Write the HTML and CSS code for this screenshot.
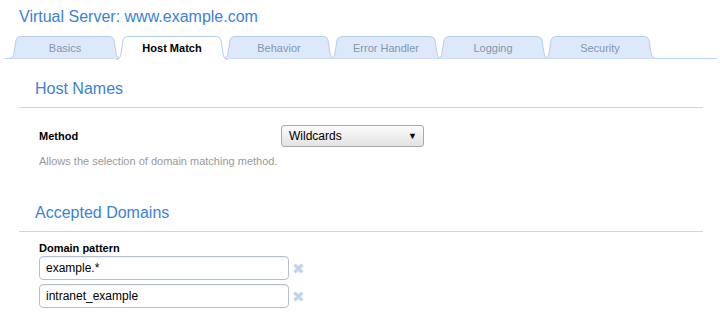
FILE: index.html
```html
<!DOCTYPE html>
<html lang="en">
<head>
  <meta charset="UTF-8" />
  <title>Virtual Server</title>
  <link rel="stylesheet" href="styles.css">
</head>
<body>
  <div class="page-title">Virtual Server: www.example.com</div>

  <div class="tabs">
    <div class="tab"><svg class="tab-bg" viewBox="0 0 112 23"><path d="M0.5,22.5 Q4,22 5,17 L7,4 Q8,0.5 12,0.5 L100,0.5 Q104,0.5 105,4 L107,17 Q108,22 111.5,22.5"/></svg><span>Basics</span></div>
    <div class="tab active"><svg class="tab-bg" viewBox="0 0 112 24"><path d="M0.5,23.5 Q4,23 5,18 L7,4 Q8,0.5 12,0.5 L100,0.5 Q104,0.5 105,4 L107,18 Q108,23 111.5,23.5"/></svg><span>Host Match</span></div>
    <div class="tab"><svg class="tab-bg" viewBox="0 0 112 23"><path d="M0.5,22.5 Q4,22 5,17 L7,4 Q8,0.5 12,0.5 L100,0.5 Q104,0.5 105,4 L107,17 Q108,22 111.5,22.5"/></svg><span>Behavior</span></div>
    <div class="tab"><svg class="tab-bg" viewBox="0 0 112 23"><path d="M0.5,22.5 Q4,22 5,17 L7,4 Q8,0.5 12,0.5 L100,0.5 Q104,0.5 105,4 L107,17 Q108,22 111.5,22.5"/></svg><span>Error Handler</span></div>
    <div class="tab"><svg class="tab-bg" viewBox="0 0 112 23"><path d="M0.5,22.5 Q4,22 5,17 L7,4 Q8,0.5 12,0.5 L100,0.5 Q104,0.5 105,4 L107,17 Q108,22 111.5,22.5"/></svg><span>Logging</span></div>
    <div class="tab"><svg class="tab-bg" viewBox="0 0 112 23"><path d="M0.5,22.5 Q4,22 5,17 L7,4 Q8,0.5 12,0.5 L100,0.5 Q104,0.5 105,4 L107,17 Q108,22 111.5,22.5"/></svg><span>Security</span></div>
  </div>

  <div class="section">
    <div class="section-title">Host Names</div>
    <div class="field">
      <div class="field-row">
        <div class="field-label">Method</div>
        <div class="select">
          <span>Wildcards</span>
          <span class="arrow">&#9660;</span>
        </div>
      </div>
      <div class="field-help">Allows the selection of domain matching method.</div>
    </div>
  </div>

  <div class="section">
    <div class="section-title">Accepted Domains</div>
    <div class="list-field">
      <div class="field-label">Domain pattern</div>
      <div class="entry">
        <div class="text-input">example.*</div>
        <span class="remove">&#10006;</span>
      </div>
      <div class="entry">
        <div class="text-input">intranet_example</div>
        <span class="remove">&#10006;</span>
      </div>
    </div>
  </div>
</body>
</html>
```

FILE: styles.css
```css
body {
  margin: 0;
  font-family: "Liberation Sans", Arial, sans-serif;
  background-color: #fff;
  color: #000;
}

.page-title {
  font-size: 16px;
  line-height: 18px;
  color: #3b82d6;
  padding: 8px 0 0 19px;
}

/* Вкладки */
.tabs {
  display: flex;
  align-items: flex-end;
  margin: 10px 3px 0 5px;
  padding-left: 4px;
  border-bottom: 1px solid #bcd2ec;
  height: 22px;
}

.tab {
  position: relative;
  width: 112px;
  height: 22px;
  margin-right: -5px;
  display: flex;
  align-items: center;
  justify-content: center;
  font-size: 11px;
  color: #8596ae;
}

.tab span {
  position: relative;
  padding-top: 2px;
}

.tab-bg {
  position: absolute;
  left: 0;
  top: 0;
  width: 112px;
  height: 23px;
}

.tab-bg path {
  fill: #dde9fa;
  stroke: #b7cfeb;
  stroke-width: 1;
}

.tab.active {
  height: 23px;
  margin-bottom: -1px;
  z-index: 2;
  color: #000;
  font-weight: bold;
}

.tab.active span {
  padding-bottom: 1px;
}

.tab.active .tab-bg {
  height: 24px;
}

.tab.active .tab-bg path {
  fill: #fff;
}

/* Секции */
.section {
  margin: 0 17px 0 19px;
}

.section-title {
  font-size: 16px;
  line-height: 18px;
  color: #3b82d6;
  padding: 21px 0 9px 16px;
  border-bottom: 1px solid #c9d6e6;
}

.field {
  padding: 17px 0 0 20px;
  margin-bottom: 16px;
}

.field-row {
  display: flex;
  align-items: center;
}

.field-label {
  font-size: 11px;
  font-weight: bold;
  width: 242px;
}

.select {
  height: 20px;
  border: 1px solid #a9a9a9;
  border-radius: 3px;
  background: linear-gradient(#fbfbfb, #e3e3e3);
  display: flex;
  align-items: center;
  justify-content: space-between;
  padding: 0 6px 0 7px;
  font-size: 12px;
  width: 128px;
}

.select .arrow {
  font-size: 9px;
}

.field-help {
  font-size: 11px;
  color: #999;
  padding-top: 8px;
}

.list-field {
  padding: 10px 0 0 20px;
}

.list-field .field-label {
  padding-bottom: 2px;
}

.entry {
  display: flex;
  align-items: center;
  margin-bottom: 4px;
}

.text-input {
  width: 236px;
  height: 22px;
  line-height: 22px;
  border: 1px solid #b6c0cc;
  border-radius: 4px;
  padding: 0 6px;
  font-size: 12px;
  box-shadow: inset 0 1px 1px #eef1f4;
}

.remove {
  color: #c2d5e8;
  font-size: 15px;
  line-height: 15px;
  margin-left: 3px;
}
```
